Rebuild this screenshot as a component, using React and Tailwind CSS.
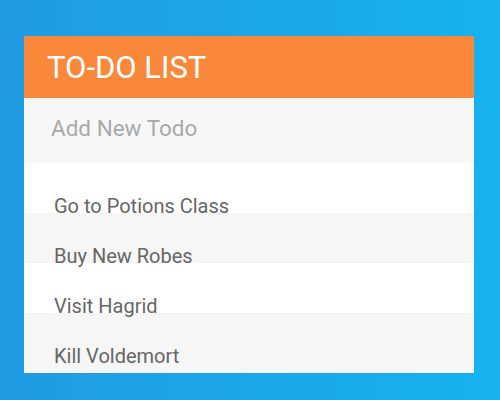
import React from "react"

const todos = ["Go to Potions Class", "Buy New Robes", "Visit Hagrid", "Kill Voldemort"]

export default function App() {
    return (
        <div
            className="w-[500px] h-[400px] overflow-hidden bg-gradient-to-r from-[#1f9be4] to-[#16b2ef] pt-[36px] pl-[24px]"
            style={{ fontFamily: "Roboto, 'Liberation Sans', sans-serif" }}
        >
            <div className="w-[450px] bg-white">
                {/* Header */}
                <div className="h-[62px] bg-[#fa883b] flex items-center pl-[23px]">
                    <h1 className="text-[31px] leading-none text-white font-normal">TO-DO LIST</h1>
                </div>

                {/* Input */}
                <div className="h-[65px] bg-[#f7f7f7] pt-[17px] pl-[27px]">
                    <input
                        placeholder="Add New Todo"
                        className="block bg-transparent w-full h-[26px] leading-[26px] text-[22.5px] text-[#666] placeholder:text-[#a9a9a9] focus:outline-none"
                    />
                </div>

                {/* List */}
                <ul>
                    {todos.map((t, i) => (
                        <li
                            key={t}
                            className={
                                (i % 2 === 1 ? "bg-[#f6f6f6] " : "bg-white ") +
                                (i === todos.length - 1 ? "h-[60px] " : "h-[50px] ") +
                                "pt-[31px] pl-[30px] text-[20px] leading-[24px] text-[#666]"
                            }
                        >
                            {t}
                        </li>
                    ))}
                </ul>
            </div>
        </div>
    )
}
